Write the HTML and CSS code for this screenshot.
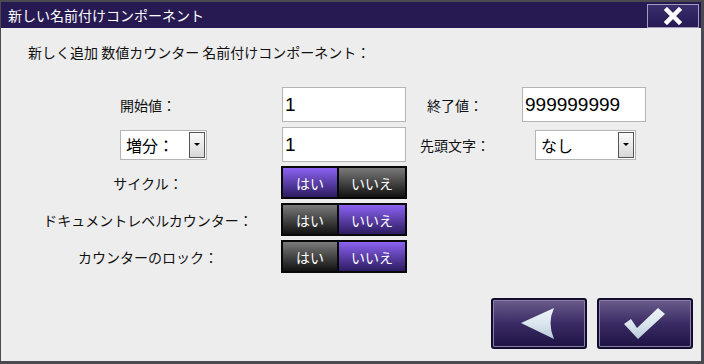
FILE: index.html
```html
<!DOCTYPE html>
<html>
<head>
    <meta charset="utf-8">
    <title>新しい名前付けコンポーネント</title>
    <link rel="stylesheet" href="styles.css">
</head>
<body>
    <div class="dialog">
        <!-- title bar -->
        <div class="titlebar">
            <span class="title">新しい名前付けコンポーネント</span>
            <button class="close-btn">
                <svg width="18" height="18" viewBox="0 0 18 18">
                    <path d="M3 3 L15 15 M15 3 L3 15" stroke="#fff" stroke-width="4.5" stroke-linecap="square"/>
                </svg>
            </button>
        </div>

        <div class="content">
            <div class="intro">新しく追加 数値カウンター 名前付けコンポーネント：</div>

            <div class="form">
                <div class="row">
                    <div class="label">開始値：</div>
                    <div class="input">1</div>
                    <div class="label label-right">終了値：</div>
                    <div class="input">999999999</div>
                </div>

                <div class="row">
                    <div class="cell-select">
                        <div class="select select-step">
                            <span>増分：</span>
                            <span class="drop"><i></i></span>
                        </div>
                    </div>
                    <div class="input">1</div>
                    <div class="label label-right">先頭文字：</div>
                    <div class="cell-select">
                        <div class="select select-prefix">
                            <span>なし</span>
                            <span class="drop"><i></i></span>
                        </div>
                    </div>
                </div>

                <div class="row row-toggle">
                    <div class="label">サイクル：</div>
                    <div class="toggle">
                        <span class="seg on">はい</span>
                        <span class="seg">いいえ</span>
                    </div>
                </div>

                <div class="row row-toggle">
                    <div class="label">ドキュメントレベルカウンター：</div>
                    <div class="toggle">
                        <span class="seg">はい</span>
                        <span class="seg on">いいえ</span>
                    </div>
                </div>

                <div class="row row-toggle">
                    <div class="label">カウンターのロック：</div>
                    <div class="toggle">
                        <span class="seg">はい</span>
                        <span class="seg on">いいえ</span>
                    </div>
                </div>
            </div>

            <div class="actions">
                <button class="action">
                    <svg width="40" height="36" viewBox="0 0 40 36">
                        <defs>
                            <linearGradient id="ic1" x1="0" y1="0" x2="0" y2="1">
                                <stop offset="0" stop-color="#eef4f8"/>
                                <stop offset="0.5" stop-color="#dbe6ee"/>
                                <stop offset="1" stop-color="#b9cbd8"/>
                            </linearGradient>
                        </defs>
                        <path d="M2 17 L35 2 Q28 17 35 33 Z" fill="url(#ic1)"/>
                    </svg>
                </button>
                <button class="action">
                    <svg width="44" height="36" viewBox="0 0 44 36">
                        <defs>
                            <linearGradient id="ic2" x1="0" y1="0" x2="0" y2="1">
                                <stop offset="0" stop-color="#eef4f8"/>
                                <stop offset="0.5" stop-color="#dbe6ee"/>
                                <stop offset="1" stop-color="#b9cbd8"/>
                            </linearGradient>
                        </defs>
                        <path d="M1 18 L8 13 L14 22 L35 2 L42 8 L15 33 Z" fill="url(#ic2)"/>
                    </svg>
                </button>
            </div>
        </div>
    </div>
</body>
</html>
```

FILE: styles.css
```css
/* dialog shell */
html, body {
    margin: 0;
    background: #4a4a50;
}

body {
    width: 704px;
    height: 364px;
    overflow: hidden;
    font-family: "Noto Sans CJK JP", "Liberation Sans", sans-serif;
}

.dialog {
    width: 700px;
    height: 359px;
    margin: 2px 3px 0 1px;
    background: #ededed;
    display: flex;
    flex-direction: column;
}

.titlebar {
    height: 26px;
    background: #271a52;
    display: flex;
    align-items: center;
    justify-content: space-between;
    padding: 0 2px 0 7px;
}

.title {
    color: #fff;
    font-size: 14px;
    line-height: 20px;
}

.close-btn {
    width: 52px;
    height: 24px;
    margin-top: 1px;
    border: 1px solid #a49cc0;
    background: linear-gradient(#3a2e6c, #261a55);
    display: flex;
    align-items: center;
    justify-content: center;
    padding: 0;
}

.content {
    flex: 1;
    display: flex;
    flex-direction: column;
    padding: 14px 8px 0 27px;
}

.intro {
    font-size: 14px;
    line-height: 20px;
    color: #111;
}

/* form grid */
.form {
    margin-top: 25px;
    margin-left: 12px;
    display: flex;
    flex-direction: column;
    gap: 5px;
}

.row {
    display: grid;
    grid-template-columns: 242px 124px 116px 124px;
    align-items: center;
    height: 35px;
}

.row-toggle {
    height: 33px;
    margin-top: -1px;
}

.label {
    font-size: 14px;
    color: #111;
    text-align: center;
    padding-right: 26px;
}

.label-right {
    padding-right: 18px;
}

.input {
    height: 33px;
    border: 1px solid #b4b4b4;
    background: #fff;
    font-family: "Liberation Sans", sans-serif;
    font-size: 19px;
    line-height: 33px;
    padding-left: 2px;
    color: #000;
}

.cell-select {
    display: flex;
}

.select {
    height: 28px;
    border: 1px solid #b4b4b4;
    background: #fff;
    display: flex;
    align-items: center;
    justify-content: space-between;
    font-size: 16px;
    color: #000;
    padding-left: 5px;
    box-sizing: border-box;
    height: 30px;
}

.select-step {
    width: 87px;
    margin-left: 80px;
}

.select-prefix {
    width: 101px;
    margin-left: 13px;
}

.drop {
    width: 14px;
    height: 24px;
    margin-right: 1px;
    border: 1px solid #555;
    background: linear-gradient(#fafafa, #d8d8d8);
    display: flex;
    align-items: center;
    justify-content: center;
}

.drop i {
    width: 0;
    height: 0;
    border-left: 3px solid transparent;
    border-right: 3px solid transparent;
    border-top: 3px solid #000;
}

/* yes / no switches */
.toggle {
    grid-column: 2;
    display: flex;
    width: 126px;
    height: 33px;
    box-sizing: border-box;
    border: 2px solid #080808;
    background: #080808;
    gap: 2px;
    margin-left: -1px;
}

.seg {
    flex: 1;
    display: flex;
    align-items: center;
    justify-content: center;
    color: #fff;
    font-size: 14px;
    background: linear-gradient(#7a7a7a, #111);
}

.seg:first-child {
    flex: 0 0 54px;
}

.seg.on {
    background: linear-gradient(#8b62f2, #2c1c60);
}

/* bottom buttons */
.actions {
    margin-top: 25px;
    display: flex;
    justify-content: flex-end;
    gap: 10px;
}

.action {
    width: 96px;
    height: 51px;
    padding: 0;
    border: 2px solid #140c2c;
    border-radius: 3px;
    background: linear-gradient(#6b5c8c, #3a2c64 50%, #1e1244);
    box-shadow: inset 0 0 0 1px #8a7eaa;
    display: flex;
    align-items: center;
    justify-content: center;
}
```
